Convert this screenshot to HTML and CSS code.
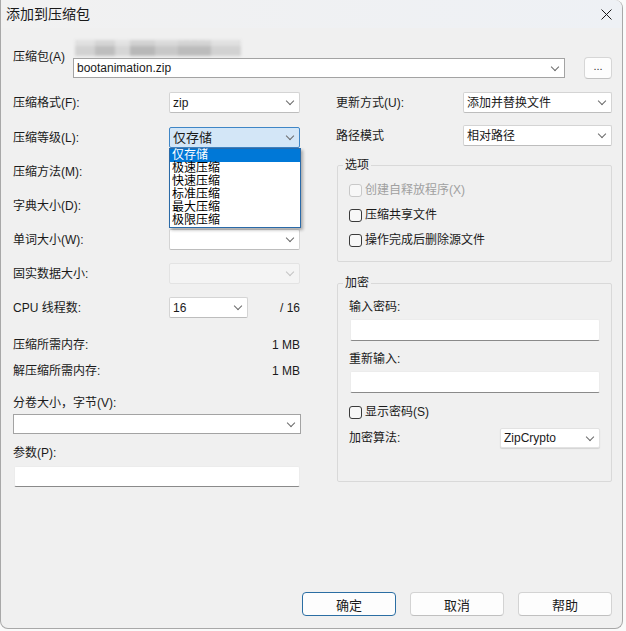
FILE: index.html
```html
<!DOCTYPE html>
<html lang="zh-CN">
<head>
    <meta charset="UTF-8">
    <title>添加到压缩包</title>
    <link rel="stylesheet" href="styles.css">
</head>
<body>
    <div class="window">
        <div class="titlebar">
            <span class="title">添加到压缩包</span>
            <svg class="close" width="11" height="11" viewBox="0 0 11 11">
                <path d="M0.5 0.5L10.5 10.5M10.5 0.5L0.5 10.5" stroke="#1a1a1a" stroke-width="1" fill="none"/>
            </svg>
        </div>

        <div class="content">
            <!-- 压缩包路径 -->
            <div class="archive">
                <span class="archive-label">压缩包(A)</span>
                <div class="archive-field">
                    <div class="blurred"></div>
                    <div class="combo edit"><span class="value">bootanimation.zip</span></div>
                </div>
                <button class="browse">...</button>
            </div>

            <div class="columns">
                <div class="col-left">
                    <div class="row"><span class="label">压缩格式(F):</span><div class="combo"><span class="value">zip</span></div></div>
                    <div class="row row-level">
                        <span class="label">压缩等级(L):</span>
                        <div class="combo combo-open">
                            <span class="value">仅存储</span>
                            <ul class="droplist">
                                <li class="selected">仅存储</li>
                                <li>极速压缩</li>
                                <li>快速压缩</li>
                                <li>标准压缩</li>
                                <li>最大压缩</li>
                                <li>极限压缩</li>
                            </ul>
                        </div>
                    </div>
                    <div class="row"><span class="label">压缩方法(M):</span><div class="combo"></div></div>
                    <div class="row"><span class="label">字典大小(D):</span><div class="combo"></div></div>
                    <div class="row"><span class="label">单词大小(W):</span><div class="combo"></div></div>
                    <div class="row"><span class="label">固实数据大小:</span><div class="combo disabled"></div></div>
                    <div class="row"><span class="label">CPU 线程数:</span><div class="combo short"><span class="value">16</span></div><span class="total">/ 16</span></div>

                    <div class="info-row mem-first"><span>压缩所需内存:</span><span>1 MB</span></div>
                    <div class="info-row mem-second"><span>解压缩所需内存:</span><span>1 MB</span></div>

                    <div class="field-label volume-label">分卷大小，字节(V):</div>
                    <div class="combo edit volume"></div>
                    <div class="field-label params-label">参数(P):</div>
                    <input class="text-input params" type="text">
                </div>

                <div class="col-right">
                    <div class="row"><span class="label">更新方式(U):</span><div class="combo"><span class="value">添加并替换文件</span></div></div>
                    <div class="row"><span class="label">路径模式</span><div class="combo"><span class="value">相对路径</span></div></div>

                    <fieldset class="group options">
                        <legend>选项</legend>
                        <label class="check-row disabled"><input type="checkbox" class="check" disabled><span>创建自释放程序(X)</span></label>
                        <label class="check-row"><input type="checkbox" class="check"><span>压缩共享文件</span></label>
                        <label class="check-row"><input type="checkbox" class="check"><span>操作完成后删除源文件</span></label>
                    </fieldset>

                    <fieldset class="group encrypt">
                        <legend>加密</legend>
                        <div class="field-label pw-label">输入密码:</div>
                        <input class="text-input pw" type="password">
                        <div class="field-label pw-label2">重新输入:</div>
                        <input class="text-input pw" type="password">
                        <label class="check-row show-pw"><input type="checkbox" class="check"><span>显示密码(S)</span></label>
                        <div class="algo-row">
                            <span>加密算法:</span>
                            <div class="combo algo"><span class="value">ZipCrypto</span></div>
                        </div>
                    </fieldset>
                </div>
            </div>

            <div class="buttons">
                <button class="btn btn-default">确定</button>
                <button class="btn">取消</button>
                <button class="btn">帮助</button>
            </div>
        </div>
    </div>
</body>
</html>
```

FILE: styles.css
```css
* {
    box-sizing: border-box;
}

body {
    margin: 0;
    background-color: #fafafa;
    font-family: "Liberation Sans", "Noto Sans CJK SC", "Microsoft YaHei", sans-serif;
    font-size: 12px;
    line-height: 16px;
    color: #1a1a1a;
}

.window {
    width: 623px;
    height: 629px;
    background-color: #f0f0f0;
    border: 1px solid #a8a8a8;
    border-top: none;
    border-radius: 0 8px 8px 8px;
    display: flex;
    flex-direction: column;
}

.titlebar {
    height: 28px;
    display: flex;
    align-items: center;
    justify-content: space-between;
    padding: 0 10px 0 5px;
    background: linear-gradient(90deg, #f1f1f1, #eef1f5);
    border-radius: 0 8px 0 0;
}

.title {
    font-size: 14px;
}

.content {
    flex: 1;
    display: flex;
    flex-direction: column;
    padding: 12px 10px 12px 12px;
}

/* 压缩包 */
.archive {
    display: flex;
}

.archive-label {
    width: 60px;
    margin-top: 9px;
}

.archive-field {
    width: 492px;
}

.blurred {
    width: 166px;
    height: 16px;
    margin: 0 0 2px 2px;
    background:
        linear-gradient(180deg, rgba(240, 240, 240, 0.45) 0 40%, transparent 40%),
        linear-gradient(90deg, #d2d2d2 0 12%, #bebebe 12% 24%, #d6d6d6 24% 33%, #b8b8b8 33% 48%, #c8c8c8 48% 62%, #bcbcbc 62% 82%, #d2d2d2 82%);
    filter: blur(1.5px);
}

.browse {
    width: 28px;
    height: 22px;
    margin: 17px 0 0 19px;
    padding: 0 0 4px;
    background-color: #fdfdfd;
    border: 1px solid #d6d6d6;
    border-bottom-color: #c2c2c2;
    border-radius: 4px;
    font-family: inherit;
    font-size: 11px;
    color: #333;
}

/* 下拉框 */
.combo {
    position: relative;
    width: 131px;
    height: 21px;
    display: flex;
    align-items: center;
    padding-left: 3px;
    background-color: #fff;
    border: 1px solid #d4d4d4;
    border-bottom-color: #bdbdbd;
    border-radius: 2px;
}

.combo::after {
    content: "";
    width: 5px;
    height: 5px;
    margin: -3px 6px 0 auto;
    border-right: 1px solid #6a6a6a;
    border-bottom: 1px solid #6a6a6a;
    transform: rotate(45deg);
}

.combo.edit {
    width: 492px;
    height: 20px;
    border-color: #a3a3a3;
    border-radius: 0;
}

.combo.disabled {
    background-color: #f4f4f4;
    border-color: #e3e3e3;
}

.combo.disabled::after {
    border-color: #c4c4c4;
}

.combo.short {
    width: 79px;
}

.combo-open {
    background-color: #d3e6f7;
    border-color: #3f86c6;
}

.combo-open .value {
    font-size: 13px;
}

.droplist {
    position: absolute;
    top: 20px;
    left: -1px;
    width: 132px;
    margin: 0;
    padding: 0;
    list-style: none;
    background-color: #fff;
    border: 1px solid #2a6aa8;
    box-shadow: 2px 2px 3px rgba(0, 0, 0, 0.3);
    z-index: 2;
}

.droplist li {
    height: 13px;
    line-height: 13px;
    font-size: 12px;
    padding-left: 2px;
    color: #000;
}

.droplist li.selected {
    background-color: #0078d7;
    color: #fff;
}

/* 两栏 */
.columns {
    display: flex;
    margin-top: 13px;
}

.col-left {
    width: 287px;
    display: flex;
    flex-direction: column;
}

.col-right {
    width: 276px;
    margin-left: 36px;
    display: flex;
    flex-direction: column;
}

.row {
    display: flex;
    align-items: center;
    height: 21px;
}

.row + .row {
    margin-top: 13px;
}

.col-left .row-level {
    margin-top: 14px;
}

.col-left .label {
    width: 156px;
    flex: none;
}

.col-right .row + .row {
    margin-top: 12px;
}

.col-right .label {
    width: 127px;
    flex: none;
}

.col-right .combo {
    width: 149px;
}

.total {
    flex: 1;
    text-align: right;
    padding-right: 0;
}

.info-row {
    display: flex;
    justify-content: space-between;
}

.mem-first {
    margin-top: 19px;
}

.mem-second {
    margin-top: 10px;
}

.volume-label {
    margin-top: 16px;
}

.combo.volume {
    width: 288px;
    margin-top: 3px;
}

.params-label {
    margin-top: 11px;
}

.text-input {
    height: 21px;
    margin: 5px 0 0 1px;
    padding: 0 4px;
    background-color: #fff;
    border: 1px solid #ececec;
    border-bottom-color: #8a8a8a;
    border-radius: 2px;
    font-family: inherit;
    font-size: 12px;
    outline: none;
}

.text-input.params {
    width: 286px;
}

/* 分组框 */
.group {
    margin: 11px 0 0 1px;
    width: 275px;
    padding: 9px 11px 13px;
    border: 1px solid #d9d9d9;
    border-radius: 2px;
}

.group legend {
    padding: 0 2px;
    margin-left: -6px;
    line-height: 16px;
}

.group.encrypt {
    margin-top: 13px;
    padding-top: 8px;
    padding-bottom: 33px;
}

.check-row {
    display: flex;
    align-items: center;
    gap: 3px;
    height: 16px;
}

.check-row + .check-row {
    margin-top: 9px;
}

.check {
    appearance: none;
    width: 13px;
    height: 13px;
    margin: 0;
    background-color: #f7f7f7;
    border: 1px solid #3a3a3a;
    border-radius: 3px;
}

.check-row.disabled {
    color: #a0a0a0;
}

.check-row.disabled .check {
    border-color: #c8c8c8;
}

.text-input.pw {
    width: 250px;
    height: 22px;
    margin-top: 4px;
}

.pw-label2 {
    margin-top: 10px;
}

.show-pw {
    margin-top: 11px;
}

.algo-row {
    display: flex;
    align-items: center;
    justify-content: space-between;
    margin-top: 8px;
}

.combo.algo {
    width: 100px;
    height: 20px;
    border-color: #e2e2e2;
    box-shadow: 0 1px 1px rgba(0, 0, 0, 0.12);
}

/* 按钮 */
.buttons {
    margin-top: auto;
    display: flex;
    justify-content: flex-end;
    gap: 14px;
}

.btn {
    width: 94px;
    height: 24px;
    background-color: #fdfdfd;
    border: 1px solid #d3d3d3;
    border-bottom-color: #c0c0c0;
    border-radius: 4px;
    font-family: inherit;
    font-size: 13px;
    color: #1a1a1a;
}

.btn-default {
    border-color: #2b6ea3;
}
```
